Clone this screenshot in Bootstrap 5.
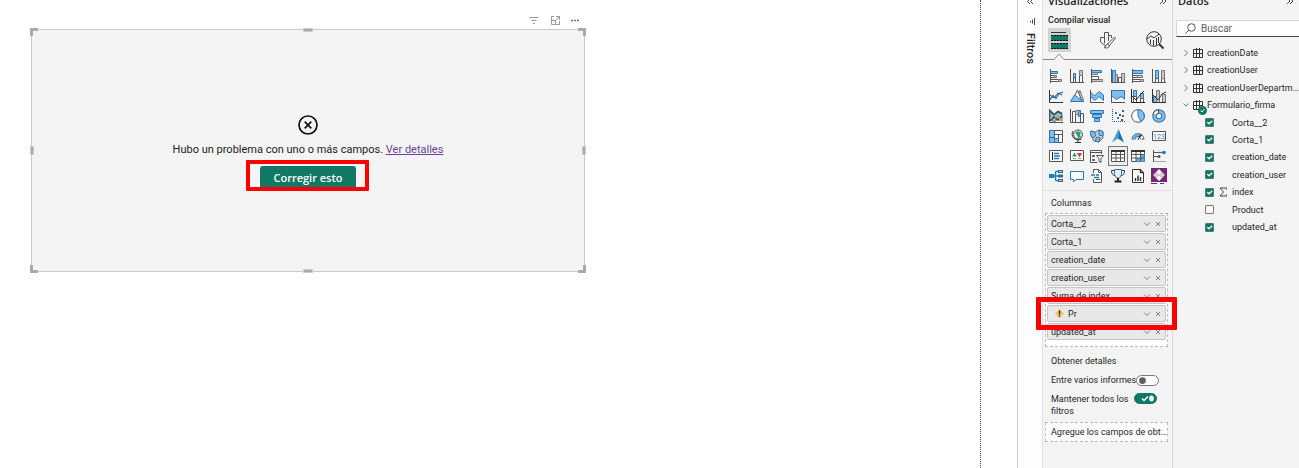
<!DOCTYPE html>
<html lang="es">
<head>
<meta charset="utf-8">
<meta name="viewport" content="width=device-width, initial-scale=1">
<title>Informe</title>
<link href="https://cdn.jsdelivr.net/npm/bootstrap@5.3.0/dist/css/bootstrap.min.css" rel="stylesheet">
<style>
:root{--ui-green:#117865;--ui-gray:#f4f4f4;--ui-line:#c8c8c8}
body{font-family:Roboto,"Open Sans",sans-serif;font-size:9px;line-height:12px;color:#252423;background:#fff}
svg{display:block;flex:none}
button{font:inherit;color:inherit;background:none;border:0;padding:0}
.canvas-area{padding:12px 0 0 31px;border-right:1px dotted #444;min-width:0}
.canvas-gutter{width:37px;border-right:1px solid #d0d0d0}
.visual{width:60%;max-width:554px;min-width:300px}
.visual-tools{height:17px;gap:9px;padding-right:5px;color:#666}
.visual-body{height:243px;background:var(--ui-gray);border:1px solid var(--ui-line);padding-top:85px}
.visual-msg{font-size:11px;line-height:16px;margin-top:7px;color:#222}
.visual-msg a{color:#6b3fa0}
.fix-wrap{margin-top:8px}
.btn-fix{background:var(--ui-green);color:#fff;font-family:"Open Sans",sans-serif;font-size:11px;font-weight:600;line-height:16px;width:96px;padding:4px 0 2px;border-radius:3px 3px 0 0}
.btn-fix:hover{background:#0c695a;color:#fff}
.callout{position:absolute;border:5px solid #fe0000;pointer-events:none;border-radius:1px}
.callout-fix{inset:-6px -13px -3px -14px;border-width:4px}
.callout-row{inset:-9px -12px}
.grip{position:absolute;background:#aaa;border:1px solid #ccc}
.grip-l,.grip-r{width:4px;height:9px;top:50%;margin-top:-5px}
.grip-t,.grip-b{width:10px;height:4px;left:50%;margin-left:-5px}
.grip-l{left:-2px}.grip-r{right:-2px}.grip-t{top:-2px}.grip-b{bottom:-2px}
.corner{position:absolute;width:8px;height:8px;border:0 solid #aaa}
.corner-tl{left:-2px;top:-2px;border-width:3px 0 0 3px}
.corner-tr{right:-2px;top:-2px;border-width:3px 3px 0 0}
.corner-bl{left:-2px;bottom:-2px;border-width:0 0 3px 3px}
.corner-br{right:-2px;bottom:-2px;border-width:0 3px 3px 0}
.filters{width:24px;background:#fdfdfd}
.filters-name{writing-mode:vertical-rl;font-size:11px;line-height:16px;font-weight:500;margin-top:5px}
.pane{background:var(--ui-gray)}
.pane-viz{width:131px;border-left:1px solid #e1e1e1;border-right:1px solid #dcdcdc}
.pane-data{width:126px}
.pane-title{font-family:"Open Sans",sans-serif;font-size:11px;line-height:20px;font-weight:600;margin:-9px 0 0;padding:0 5px}
.chev2{height:20px}
.viz-sub{font-size:9px;line-height:12px;font-weight:500;margin:3px 0 0;padding-left:5px}
.viz-tabs{padding:2px 7px 0 5px;height:28px}
.tab-on{background:#d2d2d2;width:23px;height:24px}
.notch{height:8px;margin-top:-1px}
.notch i{border-bottom:1px solid #8a8a8a;height:7px}
.notch i:first-child{width:11px}
.viz-grid{display:grid;grid-template-columns:repeat(6,1fr);grid-auto-rows:20px;padding:5px 3px 4px;border-bottom:1px solid #dedede}
.viz-grid button{display:flex;align-items:center;justify-content:center}
.picked{outline:1px solid #777;outline-offset:-1px;background:#eee}
.well-title{margin:6px 0 4px;padding-left:8px}
.drop{border:1px dashed #bbb;background:#fff;margin:0 4px 0 2px}
.fields{padding:1px 1px 6px}
.field{height:17px;background:#e8e8e8;border:1px solid #c4c4c4;border-radius:2px;padding:0 3px}
.fields .field + .field{margin-top:1px}
.details{padding:8px 15px 0 8px}
.detail-row{margin-top:7px}
.add-drop{line-height:18px;padding-left:5px;margin-top:5px}
.switch.form-check-input{width:23px;height:11px;margin:0;border:1px solid #777;background-color:#fff;background-size:9px 9px;flex:none;
background-image:url("data:image/svg+xml,%3Csvg xmlns='http://www.w3.org/2000/svg' viewBox='0 0 8 8'%3E%3Ccircle cx='4' cy='4' r='3' fill='%23605e5c'/%3E%3C/svg%3E");background-position:left 1px center;border-radius:6px}
.switch.form-check-input:checked{background-color:var(--ui-green);border-color:var(--ui-green);background-size:18px 9px;background-position:right 1px center;
background-image:url("data:image/svg+xml,%3Csvg xmlns='http://www.w3.org/2000/svg' viewBox='0 0 18 9'%3E%3Cpath d='M5 4.5l2 2 4-4' fill='none' stroke='white' stroke-width='1.4'/%3E%3Cellipse cx='14.500' cy='4.5' rx='2.3' ry='3' fill='white'/%3E%3C/svg%3E")}
.search{margin:9px 0 0 3px;height:17px;background:#fff;border:1px solid #d8d8d8;border-right:0;border-bottom-color:#444;padding-left:8px;gap:5px}
.search input{border:0;outline:0;background:none;padding:0;width:100%;min-width:0;font-size:10px;line-height:14px}
.search input::placeholder{color:#605e5c;opacity:1}
.tree{display:grid;grid-template-rows:repeat(11,1fr);grid-template-columns:100%;height:192px;margin:7px 0 0;padding:0 0 0 10px;list-style:none}
.tree li{display:flex;align-items:center;min-width:0}
.tree button{gap:4px;min-width:0}
.tree .leaf{padding-left:22px}
.tree .form-check-input{width:9px;height:9px;border:1px solid #777;border-radius:1px;margin:0;flex:none;background-size:9px 9px}
.tree .form-check-input:checked{background-color:var(--ui-green);border-color:#4d7e74}
.tree label{flex:none;display:flex;align-items:center}
.slot-icon{width:18px;display:flex;justify-content:center}
.ok-badge{position:absolute;right:-4px;bottom:-5px}
.l{fill:none;stroke:#555;stroke-width:1}
.b{fill:#83bdeb;stroke:#2b78b8;stroke-width:1}
.g{fill:#c8c8c8;stroke:#777;stroke-width:1}
.w{fill:#fff;stroke:#555;stroke-width:1}
.bl{fill:none;stroke:#1f78bd;stroke-width:1.3}
</style>
</head>
<body class="overflow-hidden">
<svg class="d-none">
  <symbol id="i-field" viewBox="0 0 19 8"><path d="M1 2.500l3 3L7 2.500M13 2l4 4M17 2l-4 4" fill="none" stroke="#777" stroke-width=".9"/></symbol>
  <symbol id="i-table" viewBox="0 0 10 10"><path d="M.5 1.500h9v8h-9zM3.500 0v10M6.500 0v10M0 5.500h10" fill="none" stroke="#333"/></symbol>
  <symbol id="i-right" viewBox="0 0 6 8"><path d="M1.500 1l3 3-3 3" fill="none" stroke="#777"/></symbol>
  <symbol id="i-next" viewBox="0 0 8 20"><path d="M1 7l3 3-3 3M4 7l3 3-3 3" fill="none" stroke="#445"/></symbol>
</svg>
<div class="d-flex min-vh-100">
  <main class="canvas-area flex-grow-1">
    <section class="visual">
      <div class="visual-tools d-flex justify-content-end align-items-start">
        <button type="button" aria-label="Filtros"><svg width="12" height="16"><path d="M1.500 5.500h9M3.500 8.500h5M5 11.500h2" fill="none" stroke="#999"/></svg></button>
        <button type="button" aria-label="Modo enfoque"><svg width="12" height="16"><path d="M5 4.500H2.500V12.500H10.500V9M2.500 8.500h4v4M7 4.500h3.500V8M6 9l4.500-4.500" fill="none" stroke="#999"/></svg></button>
        <button type="button" aria-label="Más opciones"><svg width="10" height="16"><path d="M1 8.500h2M4 8.500h2M7 8.500h2" stroke="#777" stroke-width="1.500"/></svg></button>
      </div>
      <div class="visual-body position-relative d-flex flex-column align-items-center">
        <svg width="20" height="20" viewBox="0 0 20 20"><circle cx="10" cy="10" r="9" fill="none" stroke="#111" stroke-width="1.700"/><path d="M6.700 6.700l6.600 6.600M13.300 6.700l-6.600 6.600" stroke="#111" stroke-width="1.700"/></svg>
        <div class="visual-msg">Hubo un problema con uno o más campos. <a href="#">Ver detalles</a></div>
        <div class="fix-wrap position-relative">
          <button type="button" class="btn btn-fix border-0 d-block">Corregir esto</button>
          <span class="callout callout-fix"></span>
        </div>
        <span class="grip grip-l"></span><span class="grip grip-r"></span><span class="grip grip-t"></span><span class="grip grip-b"></span>
        <span class="corner corner-tl"></span><span class="corner corner-tr"></span><span class="corner corner-bl"></span><span class="corner corner-br"></span>
      </div>
    </section>
  </main>
  <div class="canvas-gutter flex-shrink-0"></div>

  <aside class="filters flex-shrink-0 d-flex flex-column align-items-center">
    <svg width="8" height="6"><path d="M4 -1L1.500 1.500 4 4M7 -1L4.500 1.500 7 4" fill="none" stroke="#445"/></svg>
    <svg class="mt-2 ms-1" width="8" height="14"><path d="M6.500 4v7M4.500 5.500v4M2.500 7v1.500" fill="none" stroke="#446"/></svg>
    <div class="filters-name">Filtros</div>
  </aside>

  <aside class="pane pane-viz flex-shrink-0">
    <h2 class="pane-title d-flex justify-content-between"><span>Visualizaciones</span><svg class="chev2" width="8"><use href="#i-next"/></svg></h2>
    <h3 class="viz-sub">Compilar visual</h3>
    <div class="viz-tabs d-flex justify-content-between align-items-start">
      <button type="button" class="tab-on d-flex align-items-center justify-content-center" aria-label="Compilar visual"><svg width="19" height="20"><path d="M1 2.500h15" stroke="#333"/><path d="M1 5h17v6H1zM1 13h17v6H1z" fill="#117865"/><path d="M1 5.500h17M1 10.500h17M1 13.500h17M1 18.500h17" stroke="#111" stroke-dasharray="2 1"/></svg></button>
      <button type="button" aria-label="Formato"><svg width="20" height="24" viewBox="0 0 20 24"><path class="l" d="M8.500 17.500H7L2.500 14V9.500h4v6M6.500 15V4.500h4V13M10.500 7.500h3V10"/><path class="w" d="M16.500 9l1 1-6 7.500-2-1.500zM9.500 16c-2 0-1 3-3.500 3.500 3 1 5 .5 5.500-2z"/></svg></button>
      <button type="button" aria-label="Análisis"><svg width="20" height="24" viewBox="0 0 20 24"><circle class="l" cx="9" cy="11" r="7.300" style="stroke:#333"/><path class="l" d="M2 11l4-3 3 2 5-4M5.500 16v-4.500M8.500 17.500V12M11.500 17V10M13.500 15V9" style="stroke:#333"/><path d="M14 16l4.500 4.500" stroke="#333" stroke-width="2"/></svg></button>
    </div>
    <div class="notch d-flex"><i></i><svg width="10" height="8"><path d="M0 6.500L5 1l5 5.500" fill="none" stroke="#8a8a8a"/></svg><i class="flex-grow-1"></i></div>

    <div class="viz-grid">
      <button type="button" aria-label="Barras apiladas"><svg width="14" height="14"><path class="b" d="M1.500 2.500h7v2h-7z"/><path class="w" d="M1.500 6.500h4v2h-4zM1.500 10.500h8v2h-8z"/><path class="g" d="M5.500 6.500h2v2h-2zM9.500 10.500h3v2h-3z"/><path class="l" d="M1.500 0v14"/></svg></button>
      <button type="button" aria-label="Columnas apiladas"><svg width="14" height="14"><path class="b" d="M3.500 4.500h2v4h-2z"/><path class="w" d="M3.500 8.500h2v5h-2zM9.500 6.500h3v7h-3z"/><path class="g" d="M9.500 1.500h3v5h-3z"/><path class="l" d="M.5 0v13.500H14"/></svg></button>
      <button type="button" aria-label="Barras agrupadas"><svg width="14" height="14"><path class="b" d="M1.500 1.500h10v2h-10z"/><path class="g" d="M1.500 3.500h6v2h-6zM1.500 10.500h11v2h-11z"/><path class="w" d="M1.500 7.500h7v3h-7z"/><path class="l" d="M1.500 0v14"/></svg></button>
      <button type="button" aria-label="Columnas agrupadas"><svg width="14" height="14"><path class="b" d="M1.500 1.500h3v12h-3z"/><path class="g" d="M4.500 5.500h2v8h-2zM10.500 4.500h3v9h-3z"/><path class="w" d="M7.500 8.500h3v5h-3z"/><path class="l" d="M.5 0v13.500H14"/></svg></button>
      <button type="button" aria-label="Barras 100 %"><svg width="14" height="14"><path class="b" d="M1.500 1.500h10v3h-10z"/><path class="w" d="M1.500 6.500h5v2h-5zM1.500 10.500h8v2h-8z"/><path class="g" d="M6.500 6.500h5v2h-5zM9.500 10.500h3v2h-3z"/><path class="l" d="M1.500 0v14"/></svg></button>
      <button type="button" aria-label="Columnas 100 %"><svg width="14" height="14"><path class="b" d="M3.500 1.500h3v8h-3z"/><path class="w" d="M3.500 9.500h3v4h-3zM9.500 9.500h3v4h-3z"/><path class="g" d="M9.500 1.500h3v8h-3z"/><path class="l" d="M.5 0v13.500H14"/></svg></button>

      <button type="button" aria-label="Líneas"><svg width="14" height="14"><path class="l" d="M.5 1v12.500H14M1 6l4 3 4-5 4 2" style="stroke:#333"/><path class="bl" d="M1 10.500l3-4 3 3 3-5 4-1.500"/></svg></button>
      <button type="button" aria-label="Áreas"><svg width="14" height="14"><path class="g" d="M5 12.500l5-11 4 11z"/><path class="w" d="M4 8l3.500-7 4 10z"/><path class="b" d="M.5 12.500L4.500 6l4 3 5 3.500z"/></svg></button>
      <button type="button" aria-label="Áreas apiladas"><svg width="14" height="14"><path class="b" d="M.5 3l4 4 4.500-4.500L13.500 6v5.500L9 7.500 5 11.500.5 7.500z"/><path class="l" d="M.5 1v12.500H14"/></svg></button>
      <button type="button" aria-label="Áreas 100 %"><svg width="14" height="14"><path class="b" d="M.5 1.500h13V10L10 7.500l-4.500 3-5-4z"/><path class="l" d="M.5 1v12.500H14"/></svg></button>
      <button type="button" aria-label="Líneas y columnas apiladas"><svg width="14" height="14"><path class="b" d="M2.500 1.500h3v6h-3zM9.500 4.500h3v5h-3z"/><path class="w" d="M2.500 7.500h3v6h-3zM9.500 9.500h3v4h-3z"/><path class="l" d="M.5 0v13.500H14M1 7l4 4 4-5 4-4" style="stroke:#222"/></svg></button>
      <button type="button" aria-label="Líneas y columnas agrupadas"><svg width="14" height="14"><path class="b" d="M1.500 7.500h3v6h-3z"/><path class="g" d="M4.500 1.500h3v12h-3zM10.500 5.500h3v8h-3z"/><path class="l" d="M.5 0v13.500H14M1 6l5 5 4-6 4-2" style="stroke:#333"/></svg></button>

      <button type="button" aria-label="Gráfico de cintas"><svg width="14" height="14"><path class="b" d="M1 3l4 3 4-3 4 2v7l-4-2-4 3-4-3z"/><path d="M1 1.500l4 4 4-3 4 2M1 12l4-4 4 3 4-4" fill="none" stroke="#444" stroke-width="1.500"/><path d="M6 6h3v3H6zM1 8h2v2H1zM10 9h3v3h-3z" fill="#dc9a43"/><path class="l" d="M.5 0v13.500H14"/></svg></button>
      <button type="button" aria-label="Cascada"><svg width="14" height="14"><path class="w" d="M2.500 2.500h3v11h-3z"/><path class="g" d="M5.500 1.500h3v4h-3z"/><path class="b" d="M8.500 1.500h2v6h-2z"/><path class="w" d="M10.500 4.500h3v9h-3z"/><path class="l" d="M.5 0v13.500H14"/></svg></button>
      <button type="button" aria-label="Embudo"><svg width="14" height="14"><path class="b" d="M.5 1.500h13v3H.5zM2.500 5.500h9v3h-9zM4.500 9.500h5v3h-5z"/></svg></button>
      <button type="button" aria-label="Dispersión"><svg width="14" height="14"><path class="l" d="M1.500 0v12.500H14" stroke-dasharray="1 1"/><path d="M4 3h2v2H4zM6 8h2v2H6zM11 6h2v2h-2z" fill="#2b78b8"/><path d="M8 5h2v2H8zM11 1h2v2h-2zM10 10h2v2h-2z" fill="#555"/></svg></button>
      <button type="button" aria-label="Circular"><svg width="14" height="14"><circle class="w" cx="7" cy="7" r="6.300"/><path class="b" d="M7 .7A6.300 6.300 0 0 1 10 12.500L7 7z"/></svg></button>
      <button type="button" aria-label="Anillos"><svg width="14" height="14"><circle cx="7" cy="7" r="4.500" fill="none" stroke="#2b78b8" stroke-width="4.500"/><circle cx="7" cy="7" r="4.500" fill="none" stroke="#83bdeb" stroke-width="2.500"/><path d="M2.500 6A4.500 4.500 0 0 1 7 2.500" fill="none" stroke="#555" stroke-width="4.500"/><path d="M2.600 5.500A4.500 4.500 0 0 1 6 2.600" fill="none" stroke="#fff" stroke-width="2.500"/></svg></button>

      <button type="button" aria-label="Treemap"><svg width="14" height="14"><path class="w" d="M.5 1.500h13v12H.5z"/><path class="b" d="M.5 1.500h5v12h-5z"/><path class="l" d="M5.500 5.500h8M9.500 5.500v8M5.500 9.500h4M.5 8.500h5"/><path class="b" d="M5.500 9.500h4v4h-4z"/></svg></button>
      <button type="button" aria-label="Mapa"><svg width="14" height="14"><circle cx="8" cy="5.500" r="4.500" fill="#e9f3ed" stroke="#444"/><path d="M5 4l3-2 3 2-1 2 1 2-3 1-1-3z" fill="#2c9c60"/><path class="l" d="M3 2C0 7 5 13 11.500 10M8 11v2.500M5 13.500h6" style="stroke:#333"/></svg></button>
      <button type="button" aria-label="Mapa coroplético"><svg width="14" height="14"><path class="g" d="M1 2l4 1 4-2 4 2v6l-4 4-5-1-3-5z"/><path class="b" d="M.7 2l4 1 1 4-3 2-2-3zM9 1l4 1.500V7L9 6zM7 8l3 1-1 4-4-1z"/></svg></button>
      <button type="button" aria-label="Azure Maps"><svg width="14" height="14"><path d="M7.500 0L1 13.500l6-4z" fill="#41a6df"/><path d="M7.500 0L13 13.500l-6-4z" fill="#1770b0"/></svg></button>
      <button type="button" aria-label="Medidor"><svg width="14" height="14"><path d="M2.500 10.500a4.500 4.500 0 0 1 9 0" fill="none" stroke="#555" stroke-width="4"/><path d="M2.500 10a4.500 4.500 0 0 1 6-4" fill="none" stroke="#63aee7" stroke-width="3"/><path d="M11.500 9.500l-1.300-2" stroke="#fff" stroke-width="2.500"/><path d="M7 11l2-4" stroke="#222"/></svg></button>
      <button type="button" aria-label="Tarjeta"><svg width="14" height="14"><path class="w" d="M.5 2.500h13v9H.5z"/><text x="7" y="10" text-anchor="middle" font-size="7" fill="#1f78bd">123</text></svg></button>

      <button type="button" aria-label="Tarjeta de varias filas"><svg width="14" height="14"><path class="w" d="M.5 1.500h13v11H.5z"/><path class="l" d="M3.500 3v8" style="stroke:#222"/><path class="bl" d="M5 4.500h5M5 7h6M5 9.500h5"/></svg></button>
      <button type="button" aria-label="KPI"><svg width="14" height="14"><path class="w" d="M.5 1.500h13v10H.5z"/><path d="M2 7.500L4.500 3.500 7 7.500z" fill="#2c9c60"/><path d="M7 4h5L9.500 8.500z" fill="#d33"/><path d="M3 9.500h3M8 9.500h3" stroke="#999"/></svg></button>
      <button type="button" aria-label="Segmentación"><svg width="14" height="14"><path class="w" d="M.5 1.500h11v2H.5zM2.500 6.500h2v1h-2zM2.500 10.500h2v1h-2z"/><path class="l" d="M.5 3v10.500h7M11.500 3v2"/><path class="w" d="M6.500 6.500h7l-2.500 3v4l-2-1v-3z"/></svg></button>
      <button type="button" class="picked" aria-label="Tabla"><svg width="14" height="14"><path class="w" d="M.5 1.500h13v11H.5z"/><path class="l" d="M.5 5.500h13M.5 9h13M5 2v10.500M9.500 2v10.500"/><path d="M0 2h14" stroke="#333" stroke-width="2"/></svg></button>
      <button type="button" aria-label="Matriz"><svg width="14" height="14"><path class="w" d="M.5 1.500h13v11H.5z"/><path d="M5 9h4V5h4.500v7.500H5z" fill="#63aee7"/><path class="l" d="M.5 5.500h13M.5 9h13M5 2v10.500M9.500 2v10.500"/><path d="M0 2h14" stroke="#333" stroke-width="2"/></svg></button>
      <button type="button" aria-label="Influenciadores clave"><svg width="14" height="14"><path class="l" d="M1.500 1v12M1.500 3.500H8M1.500 7.500H6"/><path class="l" d="M1.500 12.500H14" stroke-dasharray="1 1"/><path class="bl" d="M6 3.500h5"/><circle cx="12" cy="3.500" r="1.800" fill="#1f78bd"/><circle cx="7" cy="7.500" r="1.500" fill="#555"/></svg></button>

      <button type="button" aria-label="Árbol de descomposición"><svg width="14" height="14"><path class="bl" d="M4 7h5M6.500 2.500v9M6.500 2.500h3M6.500 11.500h3"/><path d="M0 5h5v4H0z" fill="#1f78bd"/><path d="M9 1h5v3H9zM9 5.500h5v3H9zM9 10h5v3H9z" fill="#2f6c9c"/><path d="M10 2h3v1h-3zM10 11h3v1h-3z" fill="#9cceef"/></svg></button>
      <button type="button" aria-label="Preguntas y respuestas"><svg width="14" height="14"><path d="M.5 2.500h13v8H6L3.500 13v-2.500h-3z" fill="#f6fbff" stroke="#2b78b8"/></svg></button>
      <button type="button" aria-label="Narrativa"><svg width="14" height="14"><path class="w" d="M3.500 4V.5h5l3 3v10h-8V10"/><path class="l" d="M8.500.5v3h3M6 10.500h4"/><path class="bl" d="M1 6h4M6 6h3M4 8.500h5"/></svg></button>
      <button type="button" aria-label="Métricas"><svg width="14" height="14"><path class="l" d="M4 1.500H.5c0 3 1 5 3.500 5M10 1.500h3.500c0 3-1 5-3.500 5" style="stroke:#333"/><path d="M3.500.5h7v5L8.500 9h-3l-2-3.500z" fill="#e4f1fb" stroke="#2b78b8"/><path class="l" d="M7 9v4M3.500 12.500h7" style="stroke:#222;stroke-width:2"/></svg></button>
      <button type="button" aria-label="Informe paginado"><svg width="14" height="14"><path class="w" d="M1.500.5h8l3 3v10h-11z" style="stroke:#333"/><path d="M9.500.5v3h3M4.500 12V9M7 12V6.500M9.500 12V8" fill="none" stroke="#333" stroke-width="1.500"/></svg></button>
      <button type="button" aria-label="Power Apps"><svg width="16" height="16"><path d="M0 0h16v14H0zM0 15h6v1H0zM9 15h4v1H9z" fill="#742774"/><path d="M5 4l3 3-3 3-3-3zM11 4l3 3-3 3-3-3z" fill="#e7c4e7"/><path d="M8 1l3 3-3 3-3-3zM8 7l3 3-3 3-3-3z" fill="#fff"/></svg></button>
    </div>

    <div class="well-title">Columnas</div>
    <div class="drop fields">
      <div class="field d-flex align-items-center"><span class="flex-grow-1">Corta__2</span><svg width="19" height="8"><use href="#i-field"/></svg></div>
      <div class="field d-flex align-items-center"><span class="flex-grow-1">Corta_1</span><svg width="19" height="8"><use href="#i-field"/></svg></div>
      <div class="field d-flex align-items-center"><span class="flex-grow-1">creation_date</span><svg width="19" height="8"><use href="#i-field"/></svg></div>
      <div class="field d-flex align-items-center"><span class="flex-grow-1">creation_user</span><svg width="19" height="8"><use href="#i-field"/></svg></div>
      <div class="field d-flex align-items-center"><span class="flex-grow-1">Suma de index</span><svg width="19" height="8"><use href="#i-field"/></svg></div>
      <div class="field d-flex align-items-center position-relative z-1"><svg class="ms-1 me-1" width="9" height="9"><path d="M4.500 0L9 4.500 4.500 9 0 4.500z" fill="#f2c368"/><path d="M4.500 1.500v4M4.500 6.500v1.300" stroke="#222" stroke-width="1.300"/></svg><span class="flex-grow-1">Pr</span><svg width="19" height="8"><use href="#i-field"/></svg><span class="callout callout-row"></span></div>
      <div class="field d-flex align-items-center"><span class="flex-grow-1">updated_at</span><svg width="19" height="8"><use href="#i-field"/></svg></div>
    </div>
    <div class="details">
      <div>Obtener detalles</div>
      <div class="detail-row d-flex align-items-center justify-content-between"><label class="text-nowrap" for="sw1">Entre varios informes</label><input class="form-check-input switch" type="checkbox" role="switch" id="sw1"></div>
      <div class="detail-row d-flex align-items-start justify-content-between"><label for="sw2">Mantener todos los filtros</label><input class="form-check-input switch" type="checkbox" role="switch" id="sw2" checked></div>
    </div>
    <div class="drop add-drop text-truncate">Agregue los campos de obtención de detalles</div>
  </aside>

  <aside class="pane pane-data flex-shrink-0">
    <h2 class="pane-title d-flex justify-content-between"><span>Datos</span><svg class="chev2" width="8"><use href="#i-next"/></svg></h2>
    <div class="search d-flex align-items-center"><label for="q" aria-label="Buscar"><svg width="11" height="11"><circle cx="6.500" cy="4.500" r="3.800" fill="none" stroke="#555"/><path d="M3.800 7.200L.5 10.500" stroke="#555"/></svg></label><input id="q" type="text" placeholder="Buscar"></div>
    <ul class="tree">
      <li><button type="button" class="d-flex align-items-center"><svg width="6" height="8"><use href="#i-right"/></svg><svg width="10" height="10"><use href="#i-table"/></svg><span>creationDate</span></button></li>
      <li><button type="button" class="d-flex align-items-center"><svg width="6" height="8"><use href="#i-right"/></svg><svg width="10" height="10"><use href="#i-table"/></svg><span>creationUser</span></button></li>
      <li><button type="button" class="d-flex align-items-center"><svg width="6" height="8"><use href="#i-right"/></svg><svg width="10" height="10"><use href="#i-table"/></svg><span class="text-truncate">creationUserDepartment</span></button></li>
      <li><button type="button" class="d-flex align-items-center"><svg width="6" height="8"><path d="M.5 2.500l2.500 2.500L5.500 2.500" fill="none" stroke="#777"/></svg><span class="position-relative"><svg width="10" height="10"><use href="#i-table"/></svg><svg class="ok-badge" width="9" height="9"><circle cx="4.500" cy="4.500" r="4.500" fill="#117865"/><path d="M2.500 4.500l1.500 1.500 2.500-3" fill="none" stroke="#fff"/></svg></span><span>Formulario_firma</span></button></li>
      <li class="leaf"><input class="form-check-input" type="checkbox" id="f1" checked><label for="f1"><span class="slot-icon"></span><span>Corta__2</span></label></li>
      <li class="leaf"><input class="form-check-input" type="checkbox" id="f2" checked><label for="f2"><span class="slot-icon"></span><span>Corta_1</span></label></li>
      <li class="leaf"><input class="form-check-input" type="checkbox" id="f3" checked><label for="f3"><span class="slot-icon"></span><span>creation_date</span></label></li>
      <li class="leaf"><input class="form-check-input" type="checkbox" id="f4" checked><label for="f4"><span class="slot-icon"></span><span>creation_user</span></label></li>
      <li class="leaf"><input class="form-check-input" type="checkbox" id="f5" checked><label for="f5"><span class="slot-icon"><svg width="8" height="10"><path d="M7.500 2.500V1H1l3.500 4L1 9h6.500V7.500" fill="none" stroke="#444"/></svg></span><span>index</span></label></li>
      <li class="leaf"><input class="form-check-input" type="checkbox" id="f6"><label for="f6"><span class="slot-icon"></span><span>Product</span></label></li>
      <li class="leaf"><input class="form-check-input" type="checkbox" id="f7" checked><label for="f7"><span class="slot-icon"></span><span>updated_at</span></label></li>
    </ul>
  </aside>
</div>
<script src="https://cdn.jsdelivr.net/npm/bootstrap@5.3.0/dist/js/bootstrap.bundle.min.js"></script>
</body>
</html>
